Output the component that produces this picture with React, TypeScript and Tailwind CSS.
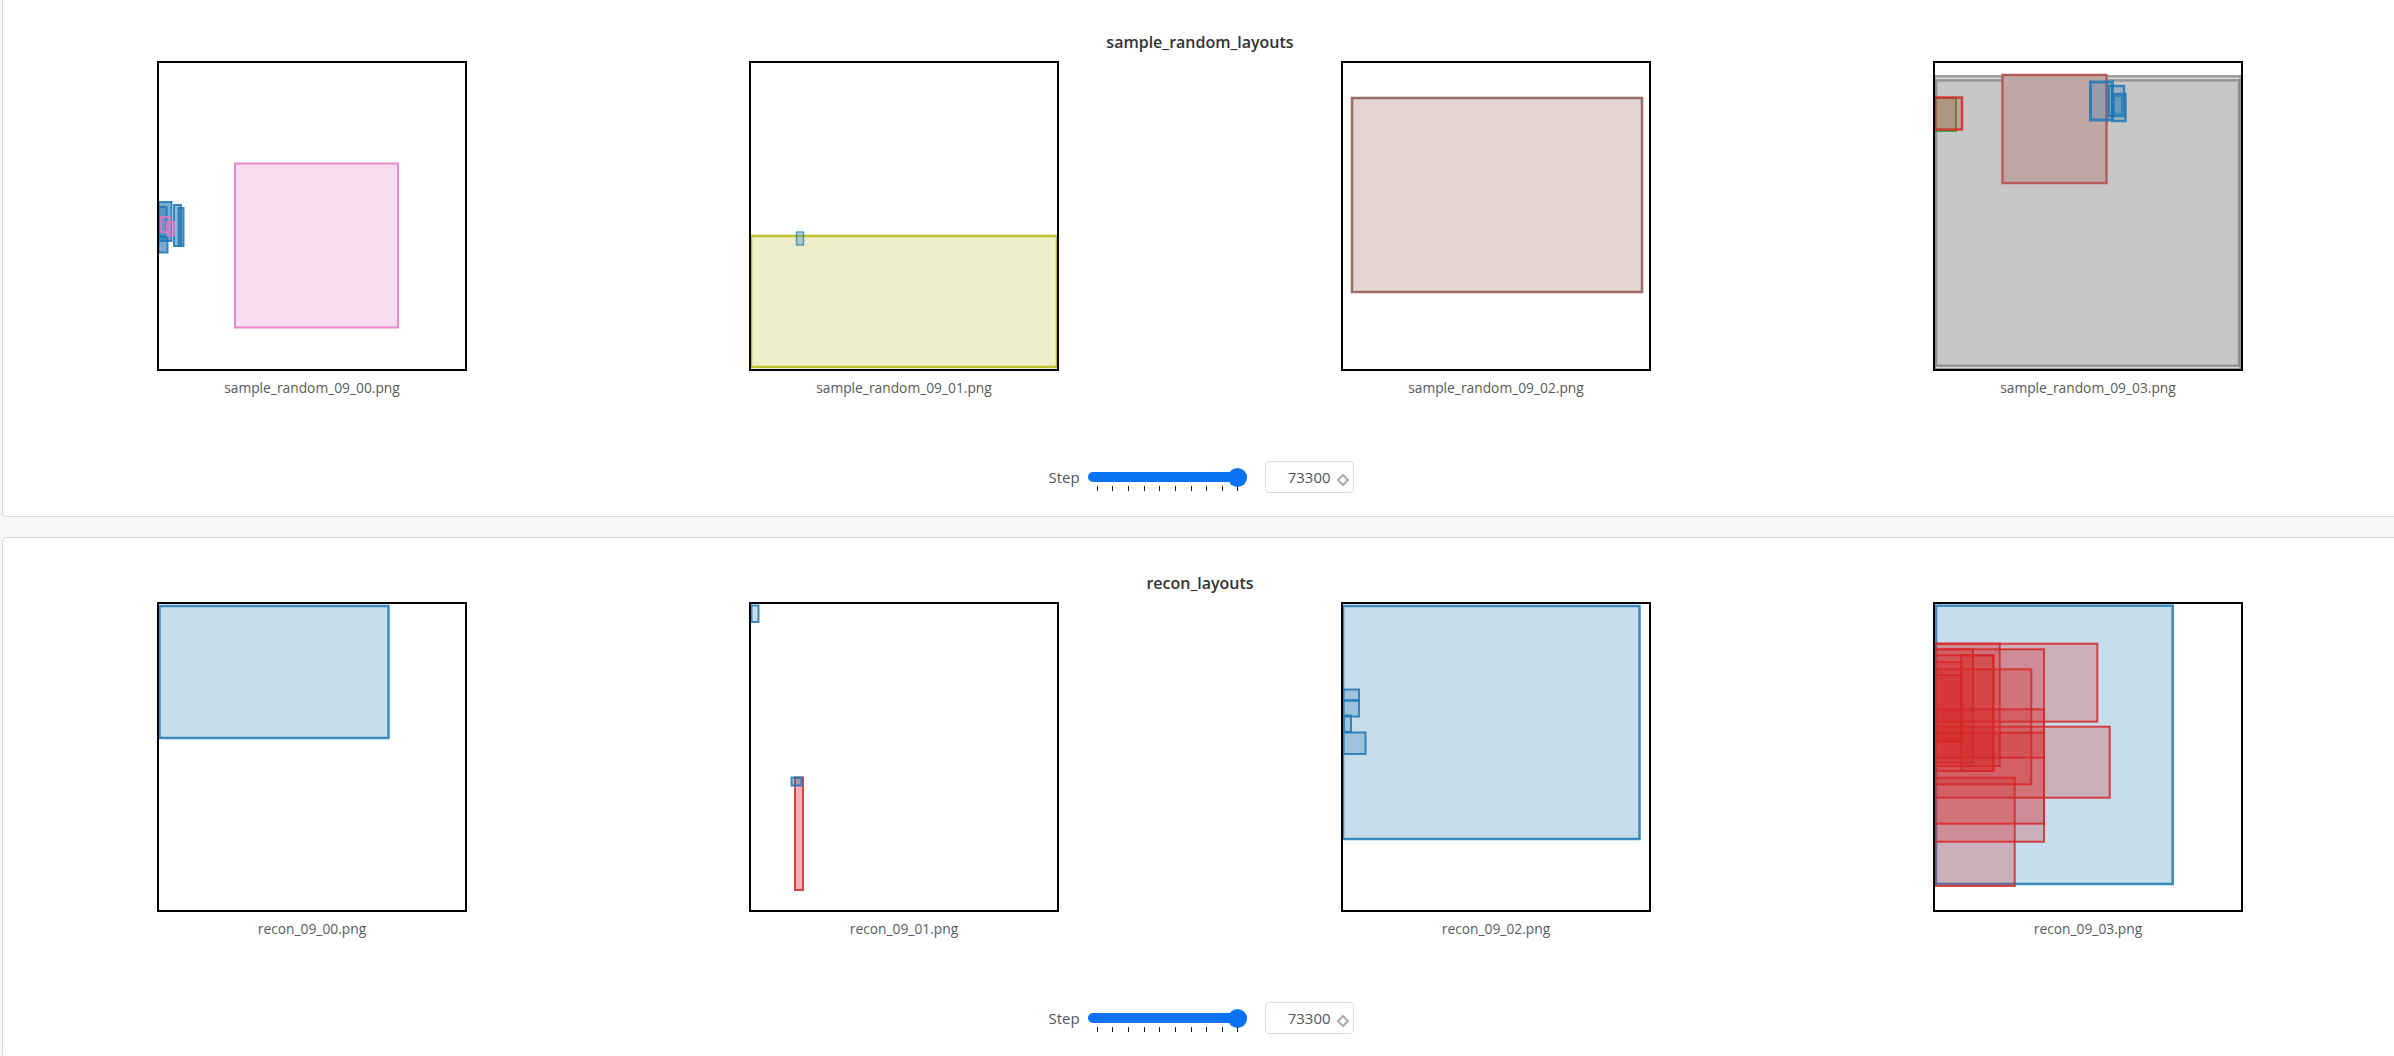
type Box = {
  x: number
  y: number
  w: number
  h: number
  c: string
  fill?: string
  stroke?: string
  fo?: number
  so?: number
  sw?: number
}

const BLUE = '#1f77b4'
const RED = '#d62728'
const PINK = '#e377c2'
const OLIVE = '#bcbd22'
const BROWN = '#8c564b'
const GRAY = '#7f7f7f'
const GREEN = '#2ca02c'

// boxes are in the 310x310 image space
const sampleImages: { name: string; boxes: Box[] }[] = [
  {
    name: 'sample_random_09_00.png',
    boxes: [
      { x: 78, y: 102.5, w: 163, h: 164, c: PINK },
      { x: 1.5, y: 141, w: 13, h: 39, c: BLUE, fo: 0.6 },
      { x: 1.5, y: 146, w: 8, h: 30, c: BLUE, fo: 0.4 },
      { x: 1.5, y: 175, w: 9, h: 16.5, c: BLUE, fo: 0.6 },
      { x: 17, y: 144, w: 7, h: 41, c: BLUE, fo: 0.5 },
      { x: 21.5, y: 147, w: 5, h: 38, c: BLUE, fo: 0.5 },
      { x: 4, y: 156, w: 9, h: 15, c: PINK, fo: 0.2 },
      { x: 10, y: 161, w: 7, h: 13.5, c: PINK, fo: 0.3 },
    ],
  },
  {
    name: 'sample_random_09_01.png',
    boxes: [
      { x: 2, y: 175, w: 306, h: 131, c: OLIVE, so: 0.95, sw: 2.5 },
      { x: 47.5, y: 171, w: 7, h: 13, c: BLUE, fo: 0.3, so: 0.7, sw: 1.5 },
    ],
  },
  {
    name: 'sample_random_09_02.png',
    boxes: [{ x: 11, y: 37, w: 290, h: 194, c: BROWN, sw: 2.5 }],
  },
  {
    name: 'sample_random_09_03.png',
    boxes: [
      { x: 1.5, y: 15.3, w: 306, h: 293, c: GRAY, so: 0.75, sw: 2.5 },
      { x: 3, y: 19.3, w: 303, h: 285.5, c: GRAY, so: 0.75, sw: 2.5 },
      { x: 69.5, y: 14, w: 104, h: 108, c: RED, fill: '#c0a7a7', fo: 1, stroke: '#b65d5d', so: 1, sw: 2.5 },
      { x: 1.5, y: 37, w: 21.5, h: 33, c: GREEN, so: 0.85 },
      { x: 2, y: 36.5, w: 27, h: 32, c: RED, sw: 2.5 },
      { x: 157.5, y: 21, w: 22, h: 38, c: BLUE, sw: 3 },
      { x: 175.5, y: 25, w: 15.5, h: 30, c: BLUE, sw: 2.5 },
      { x: 179.5, y: 33, w: 13, h: 27, c: BLUE, sw: 2.5 },
      { x: 181, y: 35, w: 8, h: 18, c: BLUE, sw: 1.5 },
    ],
  },
]

const reconImages: { name: string; boxes: Box[] }[] = [
  {
    name: 'recon_09_00.png',
    boxes: [{ x: 2.5, y: 4, w: 229, h: 132, c: BLUE, sw: 2.5 }],
  },
  {
    name: 'recon_09_01.png',
    boxes: [
      { x: 2.5, y: 3.5, w: 7, h: 16.5, c: BLUE, sw: 2 },
      { x: 46, y: 175.5, w: 8, h: 112.5, c: RED, fo: 0.35 },
      { x: 42.5, y: 175.5, w: 10, h: 8, c: BLUE, fo: 0.4 },
    ],
  },
  {
    name: 'recon_09_02.png',
    boxes: [
      { x: 2, y: 4, w: 296.5, h: 233, c: BLUE, sw: 2.5 },
      { x: 2.5, y: 87.5, w: 15.5, h: 11, c: BLUE },
      { x: 2.5, y: 98.5, w: 15.5, h: 16, c: BLUE },
      { x: 3, y: 113.5, w: 7, h: 16.5, c: BLUE },
      { x: 2.5, y: 130.5, w: 22, h: 21.5, c: BLUE },
    ],
  },
  {
    name: 'recon_09_03.png',
    boxes: [
      { x: 3, y: 3.7, w: 236.7, h: 278.3, c: BLUE, sw: 2.5 },
      { x: 2, y: 41.7, w: 162.3, h: 78, c: RED },
      { x: 2, y: 41.7, w: 64.7, h: 122.3, c: RED },
      { x: 2, y: 47.3, w: 109, h: 192.4, c: RED },
      { x: 2, y: 47.3, w: 38, h: 113.4, c: RED },
      { x: 28.3, y: 53.3, w: 32.4, h: 115.7, c: RED },
      { x: 2, y: 53.3, w: 58, h: 115.7, c: RED },
      { x: 2, y: 67.3, w: 96.3, h: 115, c: RED },
      { x: 2, y: 107.3, w: 109, h: 114.4, c: RED },
      { x: 2, y: 124.7, w: 174.7, h: 71, c: RED },
      { x: 2, y: 175.7, w: 79.7, h: 108.3, c: RED },
      { x: 2, y: 130.7, w: 109, h: 25, c: RED },
      { x: 2, y: 60, w: 26.3, h: 80, c: RED },
      { x: 2, y: 73, w: 26.3, h: 66, c: RED },
    ],
  },
]

function LayoutImage({ boxes }: { boxes: Box[] }) {
  return (
    <svg width="310" height="310" viewBox="0 0 310 310" className="block bg-white">
      {boxes.map((b, i) => (
        <rect
          key={i}
          x={b.x}
          y={b.y}
          width={b.w}
          height={b.h}
          fill={b.fill ?? b.c}
          fillOpacity={b.fo ?? 0.25}
          stroke={b.stroke ?? b.c}
          strokeOpacity={b.so ?? 0.85}
          strokeWidth={b.sw ?? 2}
        />
      ))}
      <rect x="1" y="1" width="308" height="308" fill="none" stroke="#000" strokeWidth="2" />
    </svg>
  )
}

function StepControl() {
  return (
    <div className="mt-[64px] flex h-[32px] w-[2368px] items-center justify-center pl-[2px]">
      <span className="mr-[8px] text-[15px] leading-[20px] text-[#555]">Step</span>
      <div className="relative flex h-[19px] w-[159px] items-center">
        <div className="h-[10px] w-full rounded-full bg-[#0b73f3]" />
        <div className="absolute right-0 top-0 h-[19px] w-[19px] rounded-full bg-[#0b73f3]" />
        <div className="absolute left-[9px] top-[18px] flex w-[142px] justify-between">
          {Array.from({ length: 10 }).map((_, i) => (
            <div key={i} className="h-[5px] w-px bg-[#222]" />
          ))}
        </div>
      </div>
      <div className="ml-[18px] flex h-[32px] w-[89px] items-center justify-end rounded-[4px] border border-[#dcdcdc] pr-[3px]">
        <span className="text-[15px] leading-[20px] text-[#555]">73300</span>
        <svg width="14" height="14" viewBox="0 0 14 14" className="ml-[5px] translate-y-[3px]">
          <polygon points="7,2 12,7 7,12 2,7" fill="none" stroke="#aaa" strokeWidth="2" />
        </svg>
      </div>
    </div>
  )
}

function Panel({ title, images, className }: { title: string; images: { name: string; boxes: Box[] }[]; className: string }) {
  return (
    <section className={`h-[521px] w-[2400px] shrink-0 rounded-[4px] border border-[#dadada] bg-white pl-[13px] pt-[35px] ${className}`}>
      <h2 className="w-[2368px] text-center text-[16px] font-semibold leading-[20px] text-[#333]">{title}</h2>
      <div className="mt-[9px] grid w-[2368px] grid-cols-4">
        {images.map((img) => (
          <div key={img.name} className="flex flex-col items-center">
            <LayoutImage boxes={img.boxes} />
            <p className="mt-[8px] text-[13.8px] leading-[18px] text-[#5a5a5a]">{img.name}</p>
          </div>
        ))}
      </div>
      <StepControl />
    </section>
  )
}

export default function App() {
  return (
    <div className="flex h-[1056px] w-full flex-col overflow-hidden bg-[#f8f8f8] pl-[2px] font-['Open_Sans',sans-serif]">
      <Panel title="sample_random_layouts" images={sampleImages} className="-mt-[4px]" />
      <Panel title="recon_layouts" images={reconImages} className="mt-[20px]" />
    </div>
  )
}
